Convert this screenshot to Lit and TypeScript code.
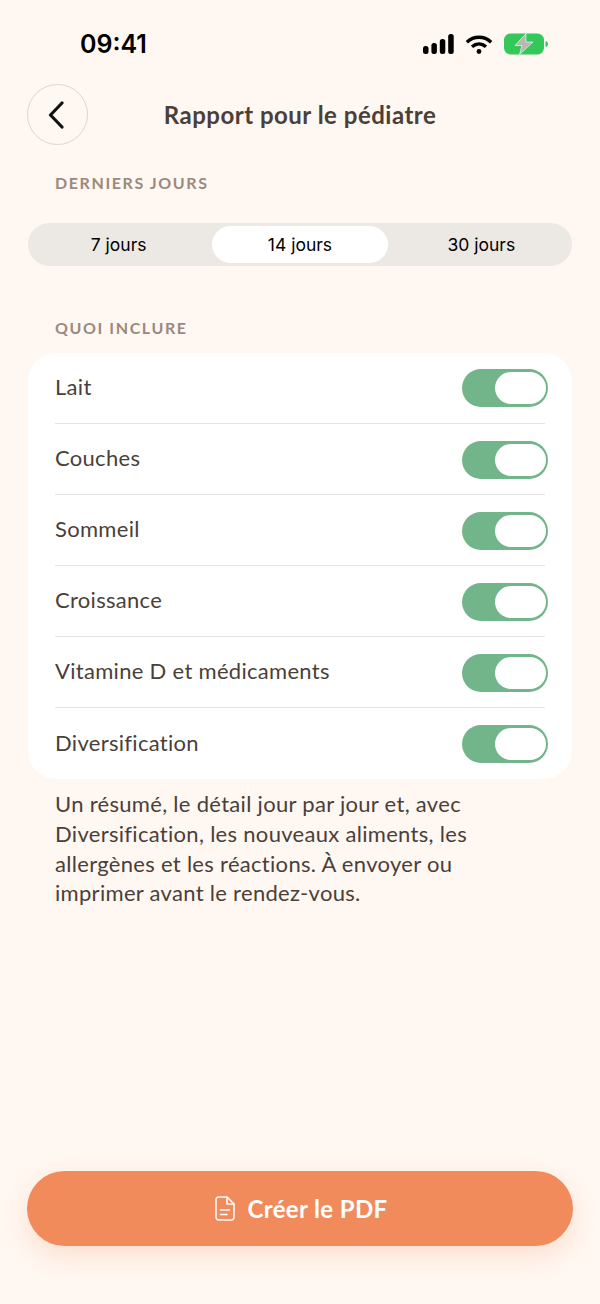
import { LitElement, html, css } from 'lit';
import { customElement, state } from 'lit/decorators.js';

const RANGES = ['7 jours', '14 jours', '30 jours'];
const ITEMS = ['Lait', 'Couches', 'Sommeil', 'Croissance', 'Vitamine D et médicaments', 'Diversification'];

@customElement('app-root')
export class AppRoot extends LitElement {
  @state() private range = 1;

  static styles = css`
    :host {
      display: flex;
      flex-direction: column;
      height: 1304px;
      box-sizing: border-box;
      padding: 0 27px 58px;
      background: #fff7f1;
      color: #4a3f39;
      font-family: 'Lato', 'Liberation Sans', sans-serif;
    }

    .status {
      display: flex;
      justify-content: space-between;
      align-items: center;
      height: 88px;
      flex: none;
      margin-bottom: -4px;
      padding: 0 25px 0 53px;
    }
    .time {
      font-family: 'Inter', sans-serif;
      font-size: 25px;
      font-weight: 600;
      color: #000;
    }
    .status-icons { display: flex; align-items: center; gap: 11px; }

    .header { display: flex; align-items: center; height: 61px; position: relative; }
    .back {
      width: 61px;
      height: 61px;
      box-sizing: border-box;
      border-radius: 50%;
      border: 1px solid #ddd6cf;
      display: flex;
      align-items: center;
      justify-content: center;
      background: transparent;
      padding: 0;
    }
    .title {
      position: absolute;
      left: 0;
      right: 0;
      text-align: center;
      font-size: 24px;
      font-weight: 700;
      letter-spacing: 0.5px;
      pointer-events: none;
    }

    .label {
      margin: 0 0 0 28px;
      font-size: 16px;
      line-height: 20px;
      font-weight: 700;
      letter-spacing: 1.6px;
      color: #9a8a7e;
    }
    .label.first { margin-top: 28px; }
    .label.second { margin-top: 52px; }

    .segment {
      display: flex;
      margin: 30px 1px 0;
      height: 43px;
      box-sizing: border-box;
      padding: 3px 0;
      border-radius: 22px;
      background: #ece8e3;
    }
    .segment button {
      flex: 1;
      margin: 0 3px;
      border: none;
      background: transparent;
      border-radius: 19px;
      font-family: 'Inter', sans-serif;
      font-size: 17.5px;
      color: #000;
      padding: 0;
    }
    .segment button.active { background: #fff; }

    .card {
      margin: 15px 1px 0;
      padding: 0 27px;
      background: #fff;
      border-radius: 28px;
    }
    .row {
      display: flex;
      align-items: center;
      justify-content: space-between;
      height: 71px;
      box-sizing: border-box;
      font-size: 22px;
      letter-spacing: 0.3px;
      border-bottom: 1px solid #e6e3e0;
    }
    .row span { padding-bottom: 3px; }
    .row:last-child { border-bottom: none; }
    .toggle {
      width: 86px;
      height: 38px;
      box-sizing: border-box;
      flex: none;
      margin-right: -3px;
      padding: 3px 2px;
      border-radius: 19px;
      background: #72b58a;
      display: flex;
      justify-content: flex-end;
    }
    .row:not(:first-child):not(:last-child) .toggle { margin-top: 2px; }
    .knob { width: 51px; height: 32px; border-radius: 16px; background: #fff; }

    .note {
      margin: 10px 28px 0;
      font-size: 22px;
      line-height: 29.8px;
      letter-spacing: 0.3px;
    }

    .cta {
      margin-top: auto;
      height: 75px;
      flex: none;
      border: none;
      border-radius: 38px;
      background: #f18b5c;
      color: #fff;
      font-family: inherit;
      font-size: 24px;
      font-weight: 700;
      letter-spacing: 0.35px;
      display: flex;
      align-items: center;
      justify-content: center;
      gap: 13px;
      padding: 0 0 0 2px;
      box-shadow: 0 10px 24px rgba(241, 139, 92, 0.22);
    }
  `;

  render() {
    return html`
      <div class="status">
        <span class="time">09:41</span>
        <div class="status-icons">
          <svg width="31" height="20" viewBox="0 0 31 20" fill="#000">
            <rect x="0" y="12" width="5.5" height="8" rx="2.5" />
            <rect x="8.4" y="9" width="5.5" height="11" rx="2.5" />
            <rect x="16.8" y="5" width="5.5" height="15" rx="2.5" />
            <rect x="25.2" y="0" width="5.5" height="20" rx="2.5" />
          </svg>
          <svg width="28" height="21" viewBox="0 0 30 22" fill="none" stroke="#000" stroke-width="3.6">
            <path d="M2 8.5 C9.5 1.5 20.5 1.5 28 8.5" />
            <path d="M7.5 13.5 C12 9.5 18 9.5 22.5 13.5" />
            <circle cx="15" cy="18.5" r="2.6" fill="#000" stroke="none" />
          </svg>
          <svg width="44" height="22" viewBox="0 0 44 22">
            <rect x="0" y="0.5" width="40" height="21" rx="6.5" fill="#34c759" />
            <path d="M41.5 8 C43.2 8.5 44 9.5 44 11 C44 12.5 43.2 13.5 41.5 14 Z" fill="#34c759" />
            <path d="M22 0.5 L11 12.5 H18 L15.5 21.5 L29 9 H22 Z" fill="#b8b8b2" stroke="#fff" stroke-width="0.6" />
          </svg>
        </div>
      </div>

      <div class="header">
        <button class="back" aria-label="Retour">
          <svg width="20" height="28" viewBox="0 0 20 28" fill="none" stroke="#111" stroke-width="3.2" stroke-linecap="round" stroke-linejoin="round">
            <path d="M14 2 L2.5 14 L14 26" />
          </svg>
        </button>
        <div class="title">Rapport pour le pédiatre</div>
      </div>

      <div class="label first">DERNIERS JOURS</div>
      <div class="segment">
        ${RANGES.map((r, i) => html`
          <button class="${i === this.range ? 'active' : ''}" @click="${() => (this.range = i)}">${r}</button>
        `)}
      </div>

      <div class="label second">QUOI INCLURE</div>
      <div class="card">
        ${ITEMS.map(item => html`
          <div class="row">
            <span>${item}</span>
            <div class="toggle"><div class="knob"></div></div>
          </div>
        `)}
      </div>

      <p class="note">
        Un résumé, le détail jour par jour et, avec<br />
        Diversification, les nouveaux aliments, les<br />
        allergènes et les réactions. À envoyer ou<br />
        imprimer avant le rendez-vous.
      </p>

      <button class="cta">
        <svg width="20" height="25" viewBox="0 0 20 25" fill="none" stroke="#fff" stroke-width="1.5" stroke-linecap="round" stroke-linejoin="round">
          <path d="M3.5 1 H12 L19 8 V21 A3 3 0 0 1 16 24 H4 A3 3 0 0 1 1 21 V3.5 A2.5 2.5 0 0 1 3.5 1 Z" />
          <path d="M12 1 V8 H19" />
          <path d="M5.5 14 H14.5 M5.5 18.5 H12" />
        </svg>
        Créer le PDF
      </button>
    `;
  }
}
